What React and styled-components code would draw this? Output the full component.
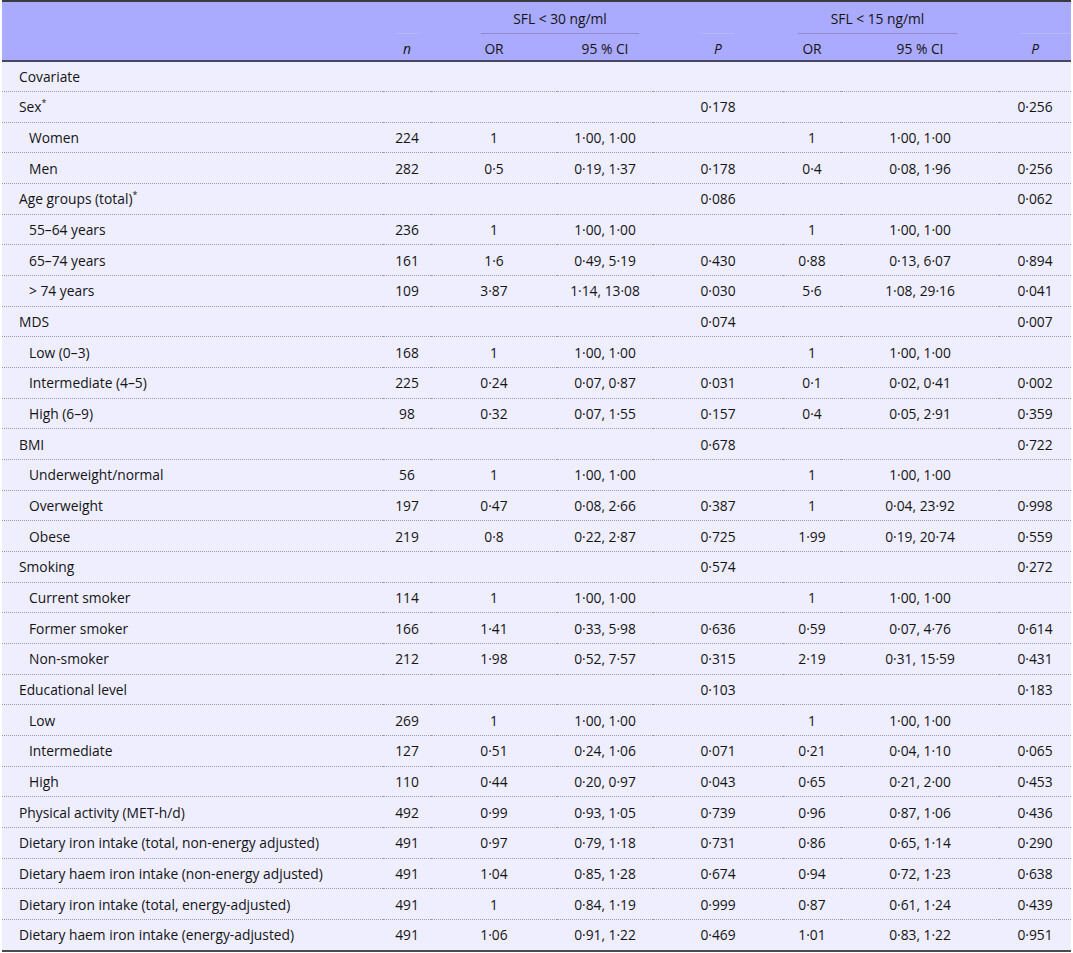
import React from "react";
import styled, { createGlobalStyle } from "styled-components";

const Global = createGlobalStyle`
  html, body { margin: 0; padding: 0; background: #ffffff; }
  body { font-family: "Open Sans", "Noto Sans", sans-serif; color: #141414; }
`;

const Page = styled.div`
  padding: 0 2px;
`;

const Frame = styled.div`
  border-top: 2px solid #3a3a3a;
  border-bottom: 2px solid #4a4a4a;
`;

const Table = styled.table`
  width: 100%;
  border-collapse: collapse;
  table-layout: fixed;
  font-size: 13.8px;
  background: #eeeeff;
`;

const Head = styled.thead`
  background: #aaaaff;
`;

const GroupRow = styled.tr`
  height: 32px;
`;

const SubRow = styled.tr`
  height: 27px;
`;

const HeadCell = styled.th`
  padding: 0;
  font-weight: normal;
  vertical-align: bottom;
  text-align: center;
`;

const SubCell = styled.th`
  padding: 2px 0 0 0;
  font-weight: normal;
  text-align: center;
  vertical-align: middle;
  font-style: ${(p) => (p.$italic ? "italic" : "normal")};
  border-bottom: 2px solid #474760;
`;

const GroupLabel = styled.div`
  line-height: 20px;
  padding-bottom: 4px;
  border-bottom: 1px solid ${(p) => (p.$faint ? "#b8b8ff" : "#8c8cc8")};
  margin-left: ${(p) => p.$ml || 0}px;
  margin-right: ${(p) => p.$mr || 0}px;
  min-height: 20px;
`;

const Row = styled.tr`
  height: 30.66px;
  & + & > td {
    border-top: 1px dotted #9a9aa8;
  }
`;

const Cell = styled.td`
  padding: 0;
  text-align: center;
  vertical-align: middle;
  white-space: nowrap;
`;

const LabelCell = styled(Cell)`
  text-align: left;
  padding-left: ${(p) => (p.$indent ? 27 : 17)}px;
`;

const Sup = styled.sup`
  font-size: 9px;
  vertical-align: 6px;
  line-height: 0;
`;

const cols = [381, 48, 126, 96, 130, 58, 158, 72];

const E = "";
const rows = [
  ["Covariate", 0, E, E, E, E, E, E, E],
  ["Sex", 0, E, E, E, "0·178", E, E, "0·256", true],
  ["Women", 1, "224", "1", "1·00, 1·00", E, "1", "1·00, 1·00", E],
  ["Men", 1, "282", "0·5", "0·19, 1·37", "0·178", "0·4", "0·08, 1·96", "0·256"],
  ["Age groups (total)", 0, E, E, E, "0·086", E, E, "0·062", true],
  ["55–64 years", 1, "236", "1", "1·00, 1·00", E, "1", "1·00, 1·00", E],
  ["65–74 years", 1, "161", "1·6", "0·49, 5·19", "0·430", "0·88", "0·13, 6·07", "0·894"],
  ["> 74 years", 1, "109", "3·87", "1·14, 13·08", "0·030", "5·6", "1·08, 29·16", "0·041"],
  ["MDS", 0, E, E, E, "0·074", E, E, "0·007"],
  ["Low (0–3)", 1, "168", "1", "1·00, 1·00", E, "1", "1·00, 1·00", E],
  ["Intermediate (4–5)", 1, "225", "0·24", "0·07, 0·87", "0·031", "0·1", "0·02, 0·41", "0·002"],
  ["High (6–9)", 1, "98", "0·32", "0·07, 1·55", "0·157", "0·4", "0·05, 2·91", "0·359"],
  ["BMI", 0, E, E, E, "0·678", E, E, "0·722"],
  ["Underweight/normal", 1, "56", "1", "1·00, 1·00", E, "1", "1·00, 1·00", E],
  ["Overweight", 1, "197", "0·47", "0·08, 2·66", "0·387", "1", "0·04, 23·92", "0·998"],
  ["Obese", 1, "219", "0·8", "0·22, 2·87", "0·725", "1·99", "0·19, 20·74", "0·559"],
  ["Smoking", 0, E, E, E, "0·574", E, E, "0·272"],
  ["Current smoker", 1, "114", "1", "1·00, 1·00", E, "1", "1·00, 1·00", E],
  ["Former smoker", 1, "166", "1·41", "0·33, 5·98", "0·636", "0·59", "0·07, 4·76", "0·614"],
  ["Non-smoker", 1, "212", "1·98", "0·52, 7·57", "0·315", "2·19", "0·31, 15·59", "0·431"],
  ["Educational level", 0, E, E, E, "0·103", E, E, "0·183"],
  ["Low", 1, "269", "1", "1·00, 1·00", E, "1", "1·00, 1·00", E],
  ["Intermediate", 1, "127", "0·51", "0·24, 1·06", "0·071", "0·21", "0·04, 1·10", "0·065"],
  ["High", 1, "110", "0·44", "0·20, 0·97", "0·043", "0·65", "0·21, 2·00", "0·453"],
  ["Physical activity (MET-h/d)", 0, "492", "0·99", "0·93, 1·05", "0·739", "0·96", "0·87, 1·06", "0·436"],
  ["Dietary iron intake (total, non-energy adjusted)", 0, "491", "0·97", "0·79, 1·18", "0·731", "0·86", "0·65, 1·14", "0·290"],
  ["Dietary haem iron intake (non-energy adjusted)", 0, "491", "1·04", "0·85, 1·28", "0·674", "0·94", "0·72, 1·23", "0·638"],
  ["Dietary iron intake (total, energy-adjusted)", 0, "491", "1", "0·84, 1·19", "0·999", "0·87", "0·61, 1·24", "0·439"],
  ["Dietary haem iron intake (energy-adjusted)", 0, "491", "1·06", "0·91, 1·22", "0·469", "1·01", "0·83, 1·22", "0·951"],
];

export default function App() {
  return (
    <Page>
      <Global />
      <Frame>
        <Table>
          <colgroup>
            {cols.map((w, i) => (
              <col key={i} style={{ width: w }} />
            ))}
          </colgroup>
          <Head>
            <GroupRow>
              <HeadCell />
              <HeadCell>
                <GroupLabel $faint $ml={13} $mr={13} />
              </HeadCell>
              <HeadCell colSpan={2}>
                <GroupLabel $ml={50} $mr={14}>SFL &lt; 30 ng/ml</GroupLabel>
              </HeadCell>
              <HeadCell>
                <GroupLabel $faint $ml={49} $mr={48} />
              </HeadCell>
              <HeadCell colSpan={2}>
                <GroupLabel $ml={15} $mr={42}>SFL &lt; 15 ng/ml</GroupLabel>
              </HeadCell>
              <HeadCell>
                <GroupLabel $faint $ml={21} $mr={0} />
              </HeadCell>
            </GroupRow>
            <SubRow>
              <SubCell />
              <SubCell $italic>n</SubCell>
              <SubCell>OR</SubCell>
              <SubCell>95 % CI</SubCell>
              <SubCell $italic>P</SubCell>
              <SubCell>OR</SubCell>
              <SubCell>95 % CI</SubCell>
              <SubCell $italic>P</SubCell>
            </SubRow>
          </Head>
          <tbody>
            {rows.map((r, i) => (
              <Row key={i}>
                <LabelCell $indent={r[1] === 1}>
                  {r[0]}
                  {r[9] && <Sup>*</Sup>}
                </LabelCell>
                {r.slice(2, 9).map((v, j) => (
                  <Cell key={j}>{v}</Cell>
                ))}
              </Row>
            ))}
          </tbody>
        </Table>
      </Frame>
    </Page>
  );
}
